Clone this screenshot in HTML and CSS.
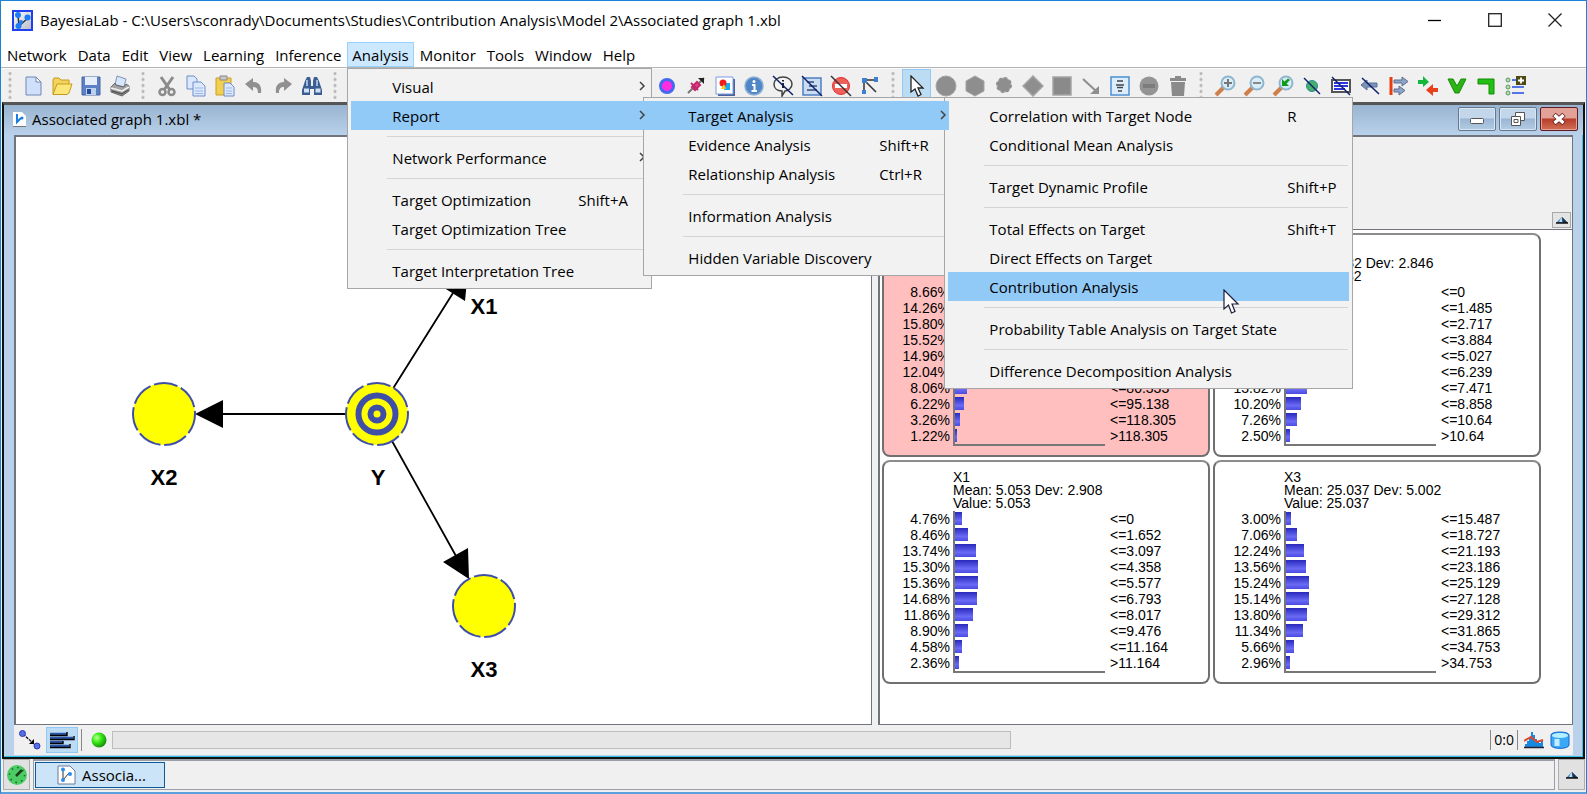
FILE: index.html
```html
<!DOCTYPE html>
<html lang="en">
<head>
<meta charset="utf-8">
<title>BayesiaLab</title>
<link rel="stylesheet" href="styles.css">
</head>
<body>
<div class="app">
  <header class="titlebar">
    <svg class="logo" width="21" height="21" viewBox="0 0 21 21">
      <defs><linearGradient id="lg" x1="0" y1="0" x2="1" y2="1"><stop offset="0" stop-color="#fff"/><stop offset="1" stop-color="#b9b9c4"/></linearGradient></defs>
      <rect x="1" y="1" width="19" height="19" fill="url(#lg)" stroke="#2040f0" stroke-width="2"/>
      <path d="M6 5L7 16L16 8" fill="none" stroke="#333" stroke-width="1.5"/>
      <circle cx="6" cy="5" r="3" fill="#1a7cf8"/><circle cx="15.500" cy="7.500" r="3" fill="#1a7cf8"/><circle cx="6.500" cy="16" r="3" fill="#1a7cf8"/><circle cx="9" cy="12" r="2" fill="#1a7cf8"/>
    </svg>
    <h1 class="title">BayesiaLab - C:\Users\sconrady\Documents\Studies\Contribution Analysis\Model 2\Associated graph 1.xbl</h1>
    <div class="winbtns">
      <button aria-label="Minimize"><svg width="14" height="14" viewBox="0 0 14 14"><path d="M0 7.500H13" stroke="#000" stroke-width="1.300"/></svg></button>
      <button aria-label="Maximize"><svg width="14" height="14" viewBox="0 0 14 14"><rect x=".7" y=".7" width="12.600" height="12.600" fill="none" stroke="#222" stroke-width="1.300"/></svg></button>
      <button aria-label="Close"><svg width="14" height="14" viewBox="0 0 14 14"><path d="M.5 .5L13.500 13.500M13.500 .5L.5 13.500" stroke="#222" stroke-width="1.300"/></svg></button>
    </div>
  </header>

  <nav class="menubar">
    <button>Network</button><button>Data</button><button>Edit</button><button>View</button><button>Learning</button><button>Inference</button>
    <div class="opened">
      <button class="current">Analysis</button>
      <ul class="menu menu-analysis">
        <li><button>Visual<svg class="arr" width="7" height="10" viewBox="0 0 7 10"><path d="M1 1L5 5L1 9"/></svg></button></li>
        <li class="open">
          <button class="hot">Report<svg class="arr" width="7" height="10" viewBox="0 0 7 10"><path d="M1 1L5 5L1 9"/></svg></button>
          <ul class="menu menu-report">
            <li class="open">
              <button class="hot">Target Analysis<svg class="arr" width="7" height="10" viewBox="0 0 7 10"><path d="M1 1L5 5L1 9"/></svg></button>
              <ul class="menu menu-target">
                <li><button>Correlation with Target Node<kbd>R</kbd></button></li>
                <li><button>Conditional Mean Analysis</button></li>
                <li class="sep"></li>
                <li><button>Target Dynamic Profile<kbd>Shift+P</kbd></button></li>
                <li class="sep"></li>
                <li><button>Total Effects on Target<kbd>Shift+T</kbd></button></li>
                <li><button>Direct Effects on Target</button></li>
                <li class="open"><button class="hot">Contribution Analysis</button>
                  <svg class="pointer" width="18" height="26" viewBox="0 0 18 26"><path d="M1 1V20L5.500 16L8.500 24L12 22.500L9 15H15Z" fill="#fff" stroke="#1c1c3c" stroke-width="1.200"/></svg></li>
                <li class="sep"></li>
                <li><button>Probability Table Analysis on Target State</button></li>
                <li class="sep"></li>
                <li><button>Difference Decomposition Analysis</button></li>
              </ul>
            </li>
            <li><button>Evidence Analysis<kbd>Shift+R</kbd></button></li>
            <li><button>Relationship Analysis<kbd>Ctrl+R</kbd></button></li>
            <li class="sep"></li>
            <li><button>Information Analysis</button></li>
            <li class="sep"></li>
            <li><button>Hidden Variable Discovery</button></li>
          </ul>
        </li>
        <li class="sep"></li>
        <li><button>Network Performance<svg class="arr" width="7" height="10" viewBox="0 0 7 10"><path d="M1 1L5 5L1 9"/></svg></button></li>
        <li class="sep"></li>
        <li><button>Target Optimization<kbd>Shift+A</kbd></button></li>
        <li><button>Target Optimization Tree</button></li>
        <li class="sep"></li>
        <li><button>Target Interpretation Tree</button></li>
      </ul>
    </div>
    <button>Monitor</button><button>Tools</button><button>Window</button><button>Help</button>
  </nav>

  <div class="toolbar">
    <i class="grip"></i>
    <button aria-label="New"><svg viewBox="0 0 22 22"><path d="M4 2H14L19 7V20H4Z" fill="#cfe0fa" stroke="#7187b5"/><path d="M14 2V7H19Z" fill="#fff" stroke="#7187b5"/></svg></button>
    <button aria-label="Open"><svg viewBox="0 0 22 22"><path d="M2 19V5L3 3H8L10 5H18V9" fill="#f3d35c" stroke="#c79c1c"/><path d="M2 19.500L6 9H21L18 18L16 19.500Z" fill="#fce678" stroke="#c79c1c"/></svg></button>
    <button aria-label="Save"><svg viewBox="0 0 22 22"><path d="M2 2H20V20H2Z" fill="#5d7fc4" stroke="#4a66a6"/><path d="M5 2H17V10H5Z" fill="#e6eefc"/><path d="M6 13H16V20H6Z" fill="#bcd0f0"/><path d="M7 14H11V19H7Z" fill="#234a9c"/></svg></button>
    <button aria-label="Print"><svg viewBox="0 0 22 22"><path d="M6 10L8 1L17 4L15 12Z" fill="#d6e6fc" stroke="#7e94bd"/><path d="M2 12L6 8L7 10L15 12L17 9L20 11V16L13 21L2 17Z" fill="#a2a2a2" stroke="#666"/><path d="M2 13L13 16L20 12" fill="none" stroke="#f2f2f2" stroke-width="1.500"/><path d="M3 16L13 19L19 15" fill="none" stroke="#555" stroke-width="1.500"/></svg></button>
    <i class="grip"></i>
    <button aria-label="Cut"><svg viewBox="0 0 22 22"><path d="M5 2L14 15M17 2L8 15" stroke="#8b8b8b" stroke-width="3"/><circle cx="6.500" cy="17" r="3" fill="none" stroke="#8b8b8b" stroke-width="2.500"/><circle cx="15.500" cy="17" r="3" fill="none" stroke="#8b8b8b" stroke-width="2.500"/></svg></button>
    <button aria-label="Copy"><svg viewBox="0 0 22 22"><path d="M2 1H9L12 4V14H2Z" fill="#dbe8fd" stroke="#6f8ec6"/><path d="M8 7H16L20 11V21H8Z" fill="#dbe8fd" stroke="#6f8ec6"/><path d="M10 13H18M10 16H18M10 18.500H18" stroke="#9db7e6"/></svg></button>
    <button aria-label="Paste"><svg viewBox="0 0 22 22"><path d="M2 3H17V20H2Z" fill="#f2d04e" stroke="#c99f2b"/><path d="M6 1H13V5H6Z" fill="#c9c9c9" stroke="#888"/><path d="M10 8H16L20 12V21H10Z" fill="#dbe8fd" stroke="#6f8ec6"/><path d="M12 13H18M12 16H18M12 18.500H18" stroke="#9db7e6"/></svg></button>
    <button aria-label="Undo"><svg viewBox="0 0 22 22"><path d="M2 9L10 3V7C16 7 19 11 18 18H15C15 13 13 12 10 12V16Z" fill="#909090"/></svg></button>
    <button aria-label="Redo"><svg viewBox="0 0 22 22"><path d="M20 9L12 3V7C6 7 3 11 4 18H7C7 13 9 12 12 12V16Z" fill="#909090"/></svg></button>
    <button aria-label="Find"><svg viewBox="0 0 22 22"><path d="M4 6L6 2H9L10 6V11H12V6L13 2H16L18 6L21 15V20H13V14H9V20H1V15Z" fill="#3b5d8f"/><path d="M3 15.500H8M14.500 15.500H19.500" stroke="#cfe0f8" stroke-width="4"/><path d="M6 5V11M16 5V11" stroke="#9db9dd" stroke-width="2"/></svg></button>
    <i class="grip"></i>
    <span class="covered"></span>
    <button aria-label="Target"><svg viewBox="0 0 22 22"><circle cx="11" cy="11" r="6.500" fill="#ff2ce0" stroke="#4468f0" stroke-width="3"/></svg></button>
    <button aria-label="Pin"><svg viewBox="0 0 22 22"><path d="M3 18L8 13M14 8L19 3" stroke="#777" stroke-width="2"/><path d="M13 3H19V9Z" fill="#222"/><path d="M6 8L13 15M7 12L12 7L15 10L10 15Z" fill="#ee3f8c" stroke="#c2266d" stroke-width="2"/></svg></button>
    <button aria-label="Image"><svg viewBox="0 0 22 22"><path d="M4 4H21V21H4Z" fill="#4b62a0"/><path d="M2 2H19V19H2Z" fill="#fff" stroke="#7a9de0"/><path d="M10 8H16V15H10Z" fill="#18aaf0"/><circle cx="9" cy="8" r="3.500" fill="#f01c1c"/><path d="M7 14L10 9L12 14Z" fill="#f8c81c"/></svg></button>
    <button aria-label="Information"><svg viewBox="0 0 22 22"><circle cx="11" cy="11" r="9" fill="#4e86c6" stroke="#8eaed4" stroke-width="1.500"/><circle cx="11" cy="6.500" r="1.500" fill="#fff"/><path d="M9 10H11.500V16M8.500 16H14" stroke="#fff" stroke-width="2" fill="none"/></svg></button>
    <button aria-label="Hide comments"><svg viewBox="0 0 22 22"><path d="M11 2C16 2 20 5 20 9S16 16 13 16L10 21V16C5 16 2 13 2 9S6 2 11 2Z" fill="#f4f4f4" stroke="#444" stroke-width="1.500"/><path d="M11 5V6.500M11 8V13" stroke="#222" stroke-width="2"/><path d="M1 1L21 20" stroke="#10206c" stroke-width="1.500"/></svg></button>
    <button aria-label="Hide notes"><svg viewBox="0 0 22 22"><path d="M2 3H20V20H2Z" fill="#c9dcf2" stroke="#4d7fc0" stroke-width="1.500"/><path d="M6 7H13M8 11H16M6 15H16" stroke="#5b6f94" stroke-width="2"/><path d="M1 1L21 21" stroke="#10206c" stroke-width="1.500"/></svg></button>
    <button aria-label="Remove forbidden"><svg viewBox="0 0 22 22"><circle cx="11" cy="11" r="8.500" fill="#f0605a" stroke="#e03030"/><path d="M5 11H17" stroke="#fff" stroke-width="4"/><path d="M1 1L21 21" stroke="#333" stroke-width="1.500"/></svg></button>
    <button aria-label="Arcs"><svg viewBox="0 0 22 22"><path d="M5 18V5H18M5 5L17 17" fill="none" stroke="#333" stroke-width="1.500"/><path d="M3 3H8V8H3ZM15 2H19V7H15ZM3 15H7V19H3Z" fill="#3f7fd0"/></svg></button>
    <i class="grip"></i>
    <button class="on" aria-label="Select" aria-pressed="true"><svg viewBox="0 0 22 22"><path d="M5 1V17L9 14L12 21L15 19.500L12 13H17Z" fill="#fff" stroke="#222" stroke-width="1.300"/></svg></button>
    <button aria-label="Node"><svg viewBox="0 0 22 22"><circle cx="11" cy="11" r="10" fill="#8e8e8e" stroke="#a5a5a5"/></svg></button>
    <button aria-label="Constraint"><svg viewBox="0 0 22 22"><path d="M11 1L20 6V16L11 21L2 16V6Z" fill="#8e8e8e" stroke="#a5a5a5"/></svg></button>
    <button aria-label="Function"><svg viewBox="0 0 22 22"><circle cx="11" cy="10" r="7" fill="#8e8e8e" stroke="#a5a5a5"/><circle cx="11" cy="10" r="7" fill="none" stroke="#8e8e8e" stroke-width="2" stroke-dasharray="3 2.500"/></svg></button>
    <button aria-label="Utility"><svg viewBox="0 0 22 22"><path d="M11 1L21 11L11 21L1 11Z" fill="#8e8e8e" stroke="#a5a5a5" stroke-width="1.500"/></svg></button>
    <button aria-label="Decision"><svg viewBox="0 0 22 22"><path d="M2 2H20V20H2Z" fill="#8a8a8a" stroke="#a5a5a5" stroke-width="1.500"/></svg></button>
    <button aria-label="Arc"><svg viewBox="0 0 22 22"><path d="M3 4L16 16" stroke="#8e8e8e" stroke-width="2"/><path d="M19 11V19H10Z" fill="#8e8e8e"/></svg></button>
    <button aria-label="Note"><svg viewBox="0 0 22 22"><path d="M2 2H20V20H2Z" fill="#dceefc" stroke="#4d8fd4" stroke-width="1.500"/><path d="M8 6H14M7 10H15M8 12.500H14M9 16H13" stroke="#444" stroke-width="1.300"/></svg></button>
    <button aria-label="Forbidden arc"><svg viewBox="0 0 22 22"><circle cx="11" cy="11" r="9.500" fill="#949494"/><path d="M5 11H17" stroke="#7c7c7c" stroke-width="4"/></svg></button>
    <button aria-label="Delete"><svg viewBox="0 0 22 22"><path d="M3 3H8V1H14V3H19V6H3ZM4 7H18L17 21H5Z" fill="#8a8a8a"/></svg></button>
    <i class="grip"></i>
    <button aria-label="Zoom in"><svg viewBox="0 0 22 22"><path d="M2 20L10 12" stroke="#cf7f4c" stroke-width="4"/><circle cx="14" cy="8" r="6.500" fill="#d8ecfa" stroke="#8eb6ce" stroke-width="2"/><path d="M14 4V12M10 8H18" stroke="#777" stroke-width="2"/></svg></button>
    <button aria-label="Zoom out"><svg viewBox="0 0 22 22"><path d="M2 20L10 12" stroke="#cf7f4c" stroke-width="4"/><circle cx="14" cy="8" r="6.500" fill="#d8ecfa" stroke="#8eb6ce" stroke-width="2"/><path d="M10 8H18" stroke="#888" stroke-width="2"/></svg></button>
    <button aria-label="Reset zoom"><svg viewBox="0 0 22 22"><path d="M2 20L10 12" stroke="#cf7f4c" stroke-width="4"/><circle cx="14" cy="8" r="6.500" fill="#d8ecfa" stroke="#8eb6ce" stroke-width="2"/><path d="M10 4V11H17L14.500 8.500L18 5L16 3.500L12.500 6.500Z" fill="#109a18"/></svg></button>
    <button aria-label="Hide nodes"><svg viewBox="0 0 22 22"><circle cx="11" cy="11" r="5.500" fill="#45b06a" stroke="#2c8a9c"/><path d="M3 3L19 19" stroke="#10206c" stroke-width="1.500"/></svg></button>
    <button aria-label="Hide labels"><svg viewBox="0 0 22 22"><path d="M2 5H20V17H2Z" fill="#fff" stroke="#555" stroke-width="2"/><path d="M4 8H18M4 11H18M4 14H15" stroke="#2a36e0" stroke-width="1.800"/><path d="M2 2L20 20" stroke="#10206c" stroke-width="1.500"/></svg></button>
    <button aria-label="Hide arcs"><svg viewBox="0 0 22 22"><path d="M2 10L8 5V8H18V12H8V15Z" fill="#7c93b8" stroke="#58719c"/><path d="M3 3L20 19" stroke="#10206c" stroke-width="1.500"/></svg></button>
    <button aria-label="Align left"><svg viewBox="0 0 22 22"><path d="M3 2V20" stroke="#ea3a10" stroke-width="3"/><path d="M6 5H14V2L20 6.500L14 11V8H6ZM6 14H11V11L17 15.500L11 20V17H6Z" fill="#8fa3c4" stroke="#5b7196"/></svg></button>
    <button aria-label="Swap"><svg viewBox="0 0 22 22"><path d="M1 5H6V1L12 7L6 12V9H1Z" fill="#12b83c"/><path d="M21 13H16V9L9 15L16 21V17H21Z" fill="#e8401c"/></svg></button>
    <button aria-label="Vertical layout"><svg viewBox="0 0 22 22"><path d="M2 4H7L11 11L15 4H20L13 18H9Z" fill="#2cb414" stroke="#158a08"/></svg></button>
    <button aria-label="Orthogonal layout"><svg viewBox="0 0 22 22"><path d="M3 4H19V19H14V9H3Z" fill="#23c014" stroke="#158a08"/></svg></button>
    <button aria-label="Legend"><svg viewBox="0 0 22 22"><path d="M8 5H12M8 12H20M8 18H20" stroke="#5474e8" stroke-width="2"/><circle cx="4" cy="5" r="2" fill="#bdd8bd" stroke="#5a9a5a"/><circle cx="4" cy="12" r="2" fill="#bdd8bd" stroke="#5a9a5a"/><circle cx="4" cy="18" r="2" fill="#bdd8bd" stroke="#5a9a5a"/><path d="M12 1H22V10H12Z" fill="#4c4a14"/><path d="M17 2.500V8.500M14 5.500H20" stroke="#fff" stroke-width="1.800"/></svg></button>
  </div>

  <main class="desktop">
    <section class="inner">
      <header class="innerbar">
        <svg class="docicon" width="15" height="16" viewBox="0 0 15 16"><path d="M1 1H10L14 5V15H1Z" fill="#fff"/><path d="M1 15.500H14" stroke="#777"/><path d="M5 3V11L9 7" fill="none" stroke="#1c7ce0" stroke-width="2"/><circle cx="10" cy="7" r="1.500" fill="#1c7ce0"/></svg>
        <h2 class="title">Associated graph 1.xbl *</h2>
        <div class="innerbtns">
          <button aria-label="Minimize document"><svg width="16" height="16" viewBox="0 0 16 16"><rect x="1.500" y="7.500" width="13" height="5" rx="1" fill="#fff" stroke="#555"/></svg></button>
          <button aria-label="Restore document"><svg width="18" height="16" viewBox="0 0 18 16"><path d="M6.500 1.500H15.500V9.500H6.500Z" fill="#fff" stroke="#555"/><path d="M2.500 5.500H11.500V14.500H2.500Z" fill="#fff" stroke="#555"/><path d="M5 8.500H9V11.500H5Z" fill="none" stroke="#555"/></svg></button>
          <button class="close" aria-label="Close document"><svg width="16" height="14" viewBox="0 0 16 14"><path d="M3 2.500L13 11.500M13 2.500L3 11.500" stroke="#622" stroke-width="5"/><path d="M3.500 3L12.500 11M12.500 3L3.500 11" stroke="#fff" stroke-width="3.200"/></svg></button>
        </div>
      </header>
      <div class="panes">
        <div class="graph">
          <svg width="640" height="570" viewBox="16 137 640 570" role="img" aria-label="Network graph">
            <g stroke="#000" stroke-width="1.800"><path d="M377 414H220M377 414L453 293M377 414L456 556"/></g>
            <path d="M195 414L223 400V428ZM468 270L465 301L441 286ZM469 579L468 548L443 562Z"/>
            <g class="nodes"><circle cx="164" cy="414" r="31"/><circle cx="377" cy="414" r="31"/><circle cx="484" cy="606" r="31"/><circle cx="484" cy="244" r="31"/></g>
            <g fill="none" stroke="#3f4fa8" stroke-width="6"><circle cx="377" cy="414" r="18.500"/><circle cx="377" cy="414" r="6.500"/></g>
            <g class="names"><text x="164" y="485">X2</text><text x="378" y="485">Y</text><text x="484" y="677">X3</text><text x="484" y="314">X1</text></g>
          </svg>
        </div>
        <div class="monitors">
          <div class="summary">
            <button class="updown" aria-label="Collapse"><svg width="12" height="8" viewBox="0 0 12 8"><path d="M0 7L6 1L12 7Z" fill="#3c78b8"/><path d="M4.500 3L6 1.500V6H3Z" fill="#b4e0f8"/><path d="M6 1L12 7H7Z" fill="#234"/><path d="M0 7H12" stroke="#111" stroke-width="1.500"/></svg></button>
          </div>
          <div class="cards" id="cards"></div>
        </div>
      </div>
      <footer class="status">
        <button aria-label="Modeling mode"><svg width="24" height="22" viewBox="0 0 24 22"><path d="M5 5L16 15" stroke="#000" stroke-width="1.200" stroke-dasharray="3 1"/><path d="M16 15V10L11 15Z"/><circle cx="4.500" cy="4.500" r="3" fill="#5470e8" stroke="#2838a8"/><circle cx="19" cy="17" r="3" fill="#5470e8" stroke="#2838a8"/></svg></button>
        <button class="on" aria-label="Validation mode" aria-pressed="true"><svg width="26" height="18" viewBox="0 0 26 18"><path d="M1 3H18M1 7H24M1 11H14M1 15H20" stroke="#2b55a8" stroke-width="2.500"/><path d="M1 4.500H18V1M1 8.500H25V5M1 12.500H14V10M1 16.500H21V13" fill="none" stroke="#000" stroke-width="1.400"/></svg></button>
        <i class="rule"></i>
        <svg class="led" width="16" height="16" viewBox="0 0 16 16"><defs><radialGradient id="led" cx=".35" cy=".35" r=".7"><stop offset="0" stop-color="#c8ff9c"/><stop offset=".4" stop-color="#3ef01c"/><stop offset="1" stop-color="#148a08"/></radialGradient></defs><circle cx="8" cy="8" r="7.500" fill="url(#led)"/></svg>
        <div class="progress"></div>
        <div class="tray">
          <output class="count">0:0</output>
          <svg width="20" height="18" viewBox="0 0 20 18"><path d="M1 16V13H3V10H5V7H7V1H9V4H11V8H13V10H15V12H17V9H19V16Z" fill="#1888e0"/><path d="M0 10L7 6L13 11L19 9" fill="none" stroke="#e0482c" stroke-width="2"/><path d="M0 16.500H20" stroke="#223" stroke-width="1.500"/></svg>
          <svg width="20" height="18" viewBox="0 0 20 18"><path d="M1 4C1 0 19 0 19 4V14C19 18.500 1 18.500 1 14Z" fill="#3ca8f8" stroke="#1068c8"/><ellipse cx="10" cy="4.500" rx="8" ry="2.500" fill="#b4f0ff"/><path d="M7 8V15" stroke="#c8ecff" stroke-width="5"/></svg>
        </div>
      </footer>
    </section>
    <footer class="taskbar">
      <button class="clock" aria-label="Activity"><svg width="22" height="22" viewBox="0 0 22 22"><circle cx="11" cy="11" r="10" fill="#4ccc64"/><circle cx="11" cy="11" r="7.500" fill="none" stroke="#245c2c" stroke-width="1.500" stroke-dasharray="1.500 4.390"/><path d="M10 12L16 6" stroke="#1c3c1c" stroke-width="2.500"/></svg></button>
      <div class="tasks"><button class="task"><svg width="19" height="20" viewBox="0 0 19 20"><path d="M1 1H13L18 6V19H1Z" fill="#fff" stroke="#6a7a9c"/><path d="M6 4V15L12 8" fill="none" stroke="#333"/><circle cx="6" cy="4.500" r="2" fill="#2c8cf0"/><circle cx="6" cy="15" r="2" fill="#2c8cf0"/><circle cx="13" cy="9" r="2" fill="#2c8cf0"/></svg>Associa...</button></div>
      <button class="expand" aria-label="Expand"><svg width="12" height="8" viewBox="0 0 12 8"><path d="M0 7L6 1L12 7Z" fill="#3c78b8"/><path d="M4.500 3L6 1.500V6H3Z" fill="#b4e0f8"/><path d="M6 1L12 7H7Z" fill="#234"/><path d="M0 7H12" stroke="#111" stroke-width="1.500"/></svg></button>
    </footer>
  </main>
</div>
<script src="monitors.js"></script>
</body>
</html>
```
FILE: styles.css
```css
* { box-sizing: border-box; }
body { margin: 0; font: 15px/20px "Open Sans", "Noto Sans", sans-serif; color: #000; }
button { font: inherit; color: inherit; border: 0; padding: 0; margin: 0; background: none; display: flex; align-items: center; }
ul { list-style: none; margin: 0; padding: 0; }
h1, h2 { margin: 0; font: inherit; white-space: nowrap; }
svg { display: block; flex: none; }

.app { height: 100vh; min-height: 600px; display: flex; flex-direction: column; border: 1px solid #1a82d8; border-bottom: 2px solid #5aa0dc; background: #fff; overflow: hidden; }

.titlebar { height: 41px; flex: none; display: flex; align-items: center; padding: 0 24px 3px 11px; }
.logo { margin-right: 7px; }
.winbtns { margin-left: auto; display: flex; gap: 46px; }

.menubar { height: 26px; flex: none; display: flex; align-items: flex-start; gap: 1px; padding-left: 1px; border-bottom: 1px solid #b4b4b4; position: relative; z-index: 10; }
.menubar > button, .current { height: 25px; padding: 0 5px; }
.opened { position: relative; }
.current { background: #cce8ff; box-shadow: inset 0 0 0 1px #99d1ff; }

.menu { position: absolute; background: #f2f2f2; border: 1px solid #a6a6a6; padding: 3px; }
.menu-analysis { left: 0; top: 26px; width: 305px; }
.menu-report, .menu-target { left: calc(100% - 5px); top: -4px; z-index: 1; }
.menu-report { width: 310px; }
.menu-target { width: 409px; }
.menu li { position: relative; }
.menu li.open { z-index: 3; }
.menu button { width: 100%; height: 29px; padding-left: 41px; position: relative; text-align: left; }
.menu .hot { background: #91c9f7; z-index: 2; }
.menu .sep { height: 13px; padding: 6px 1px 0 36px; }
.menu .sep::after { content: ""; display: block; height: 1px; background: #d4d4d4; }
.menu kbd { font: inherit; margin-left: auto; width: 70px; }
.menu-target kbd { width: 62px; }
.arr { margin: 0 2px 2px auto; fill: none; stroke: #444; stroke-width: 1.5; }
.pointer { position: absolute; left: 275px; top: 17px; z-index: 4; }

.toolbar { height: 34px; flex: none; display: flex; align-items: stretch; background: #f0f0f0; border-top: 1px solid #fafafa; }
.toolbar button { width: 29px; justify-content: center; }
.toolbar button svg { width: 22px; height: 22px; }
.toolbar .on { background: #bcdcf4; box-shadow: inset 0 0 0 1px #90c8f6; }
.grip { width: 18px; flex: none; margin: 3px 0; background: radial-gradient(circle, #b4b4b4 1px, transparent 2px) center / 6px 6px repeat-y; }
.grip:first-child { width: 17px; }
.covered { width: 308px; flex: none; }

.desktop { flex: 1; min-height: 0; display: flex; flex-direction: column; background: #f0f0f0; padding: 0 1px; }
.inner { flex: 1; min-height: 0; display: flex; flex-direction: column; background: #b9d1ea; border: solid #111; border-width: 3px 2px 2px; border-top-color: #555; box-shadow: inset -1px -1px #32c4e8; padding: 0 10px 2px; }
.innerbar { height: 30px; flex: none; display: flex; align-items: center; margin: 0 -10px; padding: 0 5px 2px 8px; background: linear-gradient(#99b4d1, #b9d1ea); }
.docicon { margin-right: 5px; }
.innerbtns { margin-left: auto; display: flex; gap: 3px; }
.innerbtns button { width: 38px; height: 24px; justify-content: center; border: 1px solid #64788f; border-radius: 2px; box-shadow: inset 0 0 0 1px #d8e6f4; background: linear-gradient(#c4d6ea 45%, #9bb6d4 50%, #b4cce4); }
.innerbtns .close { border-color: #5c1c20; box-shadow: inset 0 0 0 1px #e4a098; background: linear-gradient(#e2a298 45%, #b83c28 50%, #d07058); }

.panes { flex: 1; min-height: 0; display: grid; grid-template-columns: minmax(0, 1fr) 695px; gap: 6px; background: #f0f0f0; }
.graph { background: #fff; border: solid #70747c; border-width: 2px 1px 1px 2px; overflow: hidden; min-height: 0; }
.nodes { fill: #ff0; stroke: #3f4fa8; stroke-width: 2; stroke-dasharray: 24 3.82; stroke-dashoffset: 3.4; }
.names { font: bold 22px "Liberation Sans", Arial, sans-serif; text-anchor: middle; }

.monitors { display: flex; flex-direction: column; min-height: 0; border: solid #70747c; border-width: 2px 1px 1px 2px; }
.summary { height: 92px; flex: none; display: flex; justify-content: flex-end; align-items: flex-end; padding: 1px; }
.updown { width: 19px; height: 16px; justify-content: center; border: 1px solid #a8a8a8; background: #e4e4e4; }
.updown, .expand { flex: none; }
.cards { flex: 1; min-height: 0; overflow: hidden; display: grid; grid-template-columns: 328px 328px; grid-auto-rows: 224px; align-content: start; gap: 3px; padding: 3px 2px; background: #fff; border-top: 1px solid #70747c; font: 14px/13px "Liberation Sans", Arial, sans-serif; }
.card { border: 2px solid #707070; border-top-color: #8c8c8c; border-radius: 8px; padding: 9px 0 0 69px; white-space: nowrap; }
.card.target { background: #ffbfbf; }
.rows { margin: 1px 0 0 -68px; }
.row { display: grid; grid-template-columns: 65px 160px 80px; height: 16px; line-height: 16px; }
.row .pct { text-align: right; }
.row .track { display: block; width: 152px; margin-left: 3px; padding: 1px 0 2px; border-left: 2px solid #777; }
.bar { display: block; height: 13px; background: linear-gradient(#2828bc, #6a6af6 65%, #4a4ae0); }
.axis { width: 152px; height: 2px; background: #777; }

.status { height: 30px; flex: none; display: flex; align-items: center; background: #f0f0f0; padding: 0 3px 0 0; }
.status button { width: 32px; height: 26px; justify-content: center; }
.status .on { background: #bcdcf4; border: 1px solid #90c8f6; }
.rule { width: 1px; height: 22px; background: #888; margin: 0 9px 0 3px; }
.led { margin-right: 5px; }
.progress { width: 899px; height: 18px; background: #e6e6e6; border: 1px solid #bcbcbc; }
.tray { margin-left: auto; display: flex; align-items: center; gap: 6px; }
.count { border: solid #888; border-width: 0 1px; padding: 0 3px; font-size: 14px; }

.taskbar { height: 33px; flex: none; display: flex; gap: 3px; padding: 0 0 2px 1px; }
.clock, .expand { width: 27px; justify-content: center; background: #e1e1e1; border: 1px solid #adadad; }
.tasks { flex: 1; border: 2px solid #9a9ea6; border-width: 2px 1px 1px 1px; padding: 1px; display: flex; }
.task { width: 130px; padding-left: 21px; gap: 6px; background: #cce4f7; border: 1px solid #0a5a9c; }
```
FILE: monitors.js
```js
const monitors = [
  { name: "Y", target: true, mean: "48.952", dev: "32.114",
    rows: [[8.66, "<=5.236"], [14.26, "<=17.281"], [15.8, "<=28.403"], [15.52, "<=39.712"], [14.96, "<=51.846"], [12.04, "<=65.092"], [8.06, "<=80.333"], [6.22, "<=95.138"], [3.26, "<=118.305"], [1.22, ">118.305"]] },
  { name: "X2", mean: "4.982", dev: "2.846",
    rows: [[4.5, "<=0"], [7.8, "<=1.485"], [11.4, "<=2.717"], [14.2, "<=3.884"], [15.6, "<=5.027"], [11.7, "<=6.239"], [13.82, "<=7.471"], [10.2, "<=8.858"], [7.26, "<=10.64"], [2.5, ">10.64"]] },
  { name: "X1", mean: "5.053", dev: "2.908",
    rows: [[4.76, "<=0"], [8.46, "<=1.652"], [13.74, "<=3.097"], [15.3, "<=4.358"], [15.36, "<=5.577"], [14.68, "<=6.793"], [11.86, "<=8.017"], [8.9, "<=9.476"], [4.58, "<=11.164"], [2.36, ">11.164"]] },
  { name: "X3", mean: "25.037", dev: "5.002",
    rows: [[3, "<=15.487"], [7.06, "<=18.727"], [12.24, "<=21.193"], [13.56, "<=23.186"], [15.24, "<=25.129"], [15.14, "<=27.128"], [13.8, "<=29.312"], [11.34, "<=31.865"], [5.66, "<=34.753"], [2.96, ">34.753"]] }
];
const esc = s => s.replace("<", "&lt;").replace(">", "&gt;");
document.getElementById("cards").innerHTML = monitors.map(m => `
  <article class="card${m.target ? " target" : ""}">
    <div>${m.name}</div><div>Mean: ${m.mean} Dev: ${m.dev}</div><div>Value: ${m.mean}</div>
    <div class="rows">${m.rows.map(([p, l]) => `<div class="row"><span class="pct">${p.toFixed(2)}%</span><span class="track"><span class="bar" style="width:${p}%"></span></span><span>${esc(l)}</span></div>`).join("")}</div>
    <div class="axis"></div>
  </article>`).join("");
```
